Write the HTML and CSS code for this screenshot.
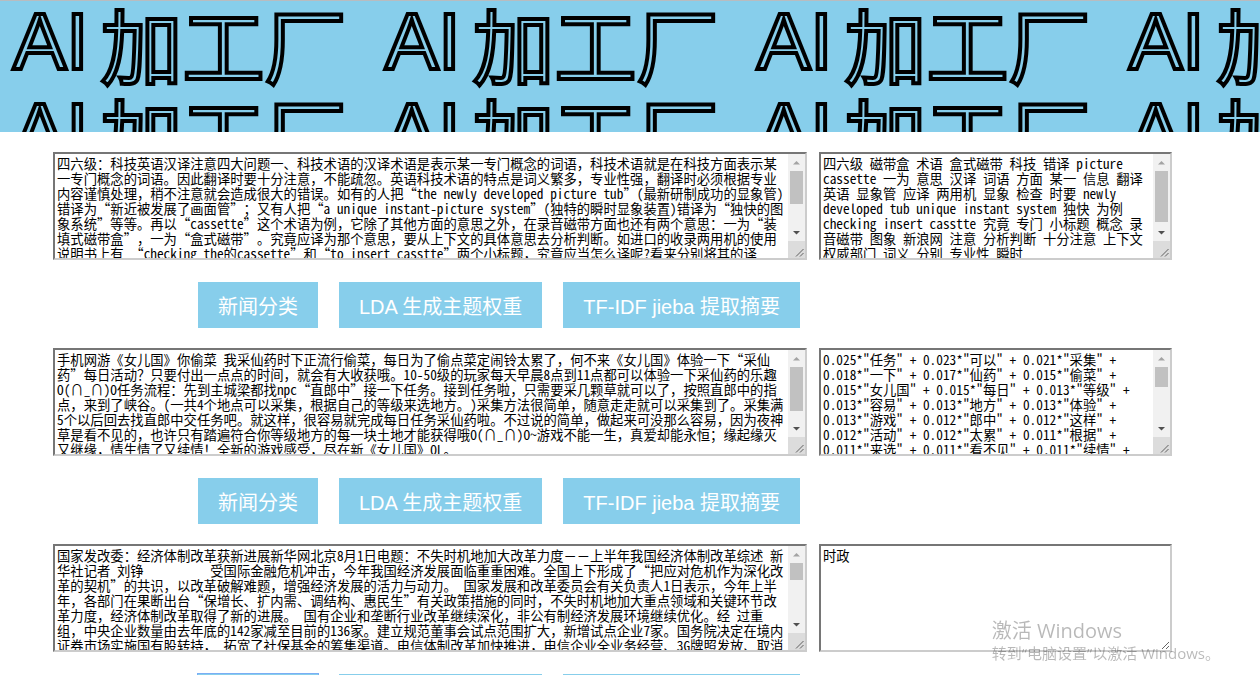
FILE: index.html
```html
<!DOCTYPE html>
<html lang="zh-CN">
<head>
<meta charset="utf-8">
<title>AI加工厂</title>
<link rel="stylesheet" href="styles.css">
</head>
<body>
<svg class="symbols" width="0" height="0" aria-hidden="true">
  <symbol id="up" viewBox="0 0 17 17"><path d="M5 10.500L8.500 7L12 10.500Z" fill="#a3a3a3"/></symbol>
  <symbol id="down" viewBox="0 0 17 17"><path d="M5 7L8.500 10.500L12 7Z" fill="#505050"/></symbol>
  <symbol id="grip" viewBox="0 0 17 17"><path d="M8 15.500L15.500 8M12 15.500L15.500 12" stroke="#606060" fill="none"/></symbol>
</svg>
<header class="banner">
  <div class="tile"><span class="latin">AI</span><span class="han">加工厂</span></div>
  <div class="tile"><span class="latin">AI</span><span class="han">加工厂</span></div>
  <div class="tile"><span class="latin">AI</span><span class="han">加工厂</span></div>
  <div class="tile"><span class="latin">AI</span><span class="han">加工厂</span></div>
  <div class="tile"><span class="latin">AI</span><span class="han">加工厂</span></div>
  <div class="tile"><span class="latin">AI</span><span class="han">加工厂</span></div>
  <div class="tile"><span class="latin">AI</span><span class="han">加工厂</span></div>
  <div class="tile"><span class="latin">AI</span><span class="han">加工厂</span></div>
</header>
<main class="panels">
  <section class="panel">
    <div class="field">
      <textarea class="box" aria-label="新闻原文">四六级：科技英语汉译注意四大问题一、科技术语的汉译术语是表示某一专门概念的词语，科技术语就是在科技方面表示某一专门概念的词语。因此翻译时要十分注意，不能疏忽。英语科技术语的特点是词义繁多，专业性强，翻译时必须根据专业内容谨慎处理，稍不注意就会造成很大的错误。如有的人把“the newly developed picture tub”(最新研制成功的显象管)错译为“新近被发展了画面管”；又有人把“a unique instant-picture system”(独特的瞬时显象装置)错译为“独快的图象系统”等等。再以“cassette”这个术语为例，它除了其他方面的意思之外，在录音磁带方面也还有两个意思：一为“装填式磁带盒”，一为“盒式磁带”。究竟应译为那个意思，要从上下文的具体意思去分析判断。如进口的收录两用机的使用说明书上有 “checking the的cassette”和“to insert casstte”两个小标题，究竟应当怎么译呢?看来分别将其的译</textarea>
      <div class="scroll"><svg class="arrow"><use href="#up"/></svg><span class="track"><span class="thumb" style="height:33px"></span></span><svg class="arrow"><use href="#down"/></svg><svg class="grip"><use href="#grip"/></svg></div>
    </div>
    <div class="field">
      <textarea class="box" aria-label="提取结果">四六级 磁带盒 术语 盒式磁带 科技 错译 picture cassette 一为 意思 汉译 词语 方面 某一 信息 翻译 英语 显象管 应译 两用机 显象 检查 时要 newly developed tub unique instant system 独快 为例 checking insert casstte 究竟 专门 小标题 概念 录音磁带 图象 新浪网 注意 分析判断 十分注意 上下文 权威部门 词义 分别 专业性 瞬时</textarea>
      <div class="scroll"><svg class="arrow"><use href="#up"/></svg><span class="track"><span class="thumb" style="height:51px"></span></span><svg class="arrow"><use href="#down"/></svg><svg class="grip"><use href="#grip"/></svg></div>
    </div>
    <div class="actions">
      <button class="action" type="button">新闻分类</button>
      <button class="action" type="button">LDA 生成主题权重</button>
      <button class="action" type="button">TF-IDF jieba 提取摘要</button>
    </div>
  </section>
  <section class="panel">
    <div class="field">
      <textarea class="box" aria-label="新闻原文">手机网游《女儿国》你偷菜 我采仙药时下正流行偷菜，每日为了偷点菜定闹铃太累了，何不来《女儿国》体验一下“采仙药”每日活动？只要付出一点点的时间，就会有大收获哦。10-50级的玩家每天早晨8点到11点都可以体验一下采仙药的乐趣O(∩_∩)O任务流程：先到主城梁都找npc“直郎中”接一下任务。接到任务啦，只需要采几颗草就可以了，按照直郎中的指点，来到了峡谷。(一共4个地点可以采集，根据自己的等级来选地方。)采集方法很简单，随意走走就可以采集到了。采集满5个以后回去找直郎中交任务吧。就这样，很容易就完成每日任务采仙药啦。不过说的简单，做起来可没那么容易，因为夜神草是看不见的，也许只有踏遍符合你等级地方的每一块土地才能获得哦O(∩_∩)O~游戏不能一生，真爱却能永恒；缘起缘灭又继缘，情生情了又续情！全新的游戏感受，尽在新《女儿国》OL。</textarea>
      <div class="scroll"><svg class="arrow"><use href="#up"/></svg><span class="track"><span class="thumb" style="height:44px"></span></span><svg class="arrow"><use href="#down"/></svg><svg class="grip"><use href="#grip"/></svg></div>
    </div>
    <div class="field">
      <textarea class="box" aria-label="主题权重">0.025*"任务" + 0.023*"可以" + 0.021*"采集" + 0.018*"一下" + 0.017*"仙药" + 0.015*"偷菜" + 0.015*"女儿国" + 0.015*"每日" + 0.013*"等级" + 0.013*"容易" + 0.013*"地方" + 0.013*"体验" + 0.013*"游戏" + 0.012*"郎中" + 0.012*"这样" + 0.012*"活动" + 0.012*"太累" + 0.011*"根据" + 0.011*"来选" + 0.011*"看不见" + 0.011*"续情" +</textarea>
      <div class="scroll"><svg class="arrow"><use href="#up"/></svg><span class="track"><span class="thumb" style="height:20px"></span></span><svg class="arrow"><use href="#down"/></svg><svg class="grip"><use href="#grip"/></svg></div>
    </div>
    <div class="actions">
      <button class="action" type="button">新闻分类</button>
      <button class="action" type="button">LDA 生成主题权重</button>
      <button class="action" type="button">TF-IDF jieba 提取摘要</button>
    </div>
  </section>
  <section class="panel">
    <div class="field">
      <textarea class="box" aria-label="新闻原文">国家发改委：经济体制改革获新进展新华网北京8月1日电题：不失时机地加大改革力度－－上半年我国经济体制改革综述 新华社记者 刘铮          受国际金融危机冲击，今年我国经济发展面临重重困难。全国上下形成了“把应对危机作为深化改革的契机”的共识，以改革破解难题，增强经济发展的活力与动力。 国家发展和改革委员会有关负责人1日表示，今年上半年，各部门在果断出台“保增长、扩内需、调结构、惠民生”有关政策措施的同时，不失时机地加大重点领域和关键环节改革力度，经济体制改革取得了新的进展。 国有企业和垄断行业改革继续深化，非公有制经济发展环境继续优化。经 过重组，中央企业数量由去年底的142家减至目前的136家。建立规范董事会试点范围扩大，新增试点企业7家。国务院决定在境内证券市场实施国有股转持， 拓宽了社保基金的筹集渠道。电信体制改革加快推进，电信企业全业务经营、3G牌照发放、取消</textarea>
      <div class="scroll"><svg class="arrow"><use href="#up"/></svg><span class="track"><span class="thumb" style="height:17px"></span></span><svg class="arrow"><use href="#down"/></svg><svg class="grip"><use href="#grip"/></svg></div>
    </div>
    <div class="field">
      <textarea class="box box-resizable" aria-label="分类结果">时政</textarea>
    </div>
    <div class="actions">
      <button class="action action-active" type="button">新闻分类</button>
      <button class="action" type="button">LDA 生成主题权重</button>
      <button class="action" type="button">TF-IDF jieba 提取摘要</button>
    </div>
  </section>
</main>
<aside class="notice">
  <p class="notice-title">激活 Windows</p>
  <p class="notice-text">转到“电脑设置”以激活 Windows。</p>
</aside>
</body>
</html>
```
FILE: styles.css
```css
* {
  box-sizing: border-box;
}

body {
  margin: 0;
  height: 100vh;
  overflow: hidden;
  background: #fff;
  font-family: "Liberation Sans", "Noto Sans CJK SC", sans-serif;
}

.symbols {
  display: none;
}

/* Banner: outlined name repeated as a pattern */
.banner {
  display: grid;
  grid-template-columns: repeat(4, 372px);
  grid-auto-rows: 90px;
  height: 132px;
  overflow: hidden;
  border-top: 1px solid #b8bcc0;
  background: skyblue;
}

.tile {
  display: flex;
  align-items: flex-start;
  gap: 12px;
  padding-left: 13px;
  white-space: nowrap;
  color: skyblue;
  -webkit-text-stroke: 4px #000;
}

.latin {
  font-size: 80px;
  line-height: 82px;
}

.han {
  font-size: 82px;
  line-height: 98px;
}

/* Text panels */
.panels {
  display: grid;
  gap: 20px;
  padding: 20px 88px 0 53px;
}

.panel {
  display: grid;
  grid-template-columns: 754fr 353fr;
  gap: 22px 12px;
}

.field {
  display: flex;
  height: 108px;
  min-width: 0;
  border: 2px solid;
  border-color: #767676 #ccc #ccc #767676;
  background: #fff;
}

.box {
  flex: 1;
  min-width: 0;
  margin: 0;
  padding: 2px;
  border: 0;
  outline: 0;
  overflow: hidden;
  background: transparent;
  color: #000;
  font-family: "Noto Sans Mono CJK SC", "Noto Sans CJK SC", monospace;
  text-spacing-trim: space-all;
  text-autospace: no-autospace;
  line-height: 15px;
  resize: none;
}

.box-resizable {
  resize: both;
}

/* Scroll bar column */
.scroll {
  display: flex;
  flex: 0 0 17px;
  flex-direction: column;
  background: #f1f1f1;
}

.arrow,
.grip {
  display: block;
  flex: none;
  width: 17px;
  height: 17px;
}

.grip {
  background: #dcdcdc;
}

.track {
  flex: 1;
  padding: 0 2px;
}

.thumb {
  display: block;
  background: #c1c1c1;
}

/* Buttons */
.actions {
  display: flex;
  gap: 21px;
  padding-left: 145px;
}

.action {
  height: 46px;
  padding: 0 20px;
  border: 0;
  background: skyblue;
  color: #fff;
  font-family: inherit;
  font-size: 20px;
  white-space: nowrap;
}

.action-active {
  outline: 1px solid #7aaef5;
}

/* System notice over the page */
.notice {
  position: fixed;
  right: 40px;
  bottom: 12px;
  color: rgba(0, 0, 0, 0.28);
  font-family: "Open Sans", "Noto Sans CJK SC", sans-serif;
  pointer-events: none;
}

.notice p {
  margin: 0;
}

.notice-title {
  font-size: 20px;
  line-height: 24px;
}

.notice-text {
  font-size: 15px;
  line-height: 20px;
}
```
